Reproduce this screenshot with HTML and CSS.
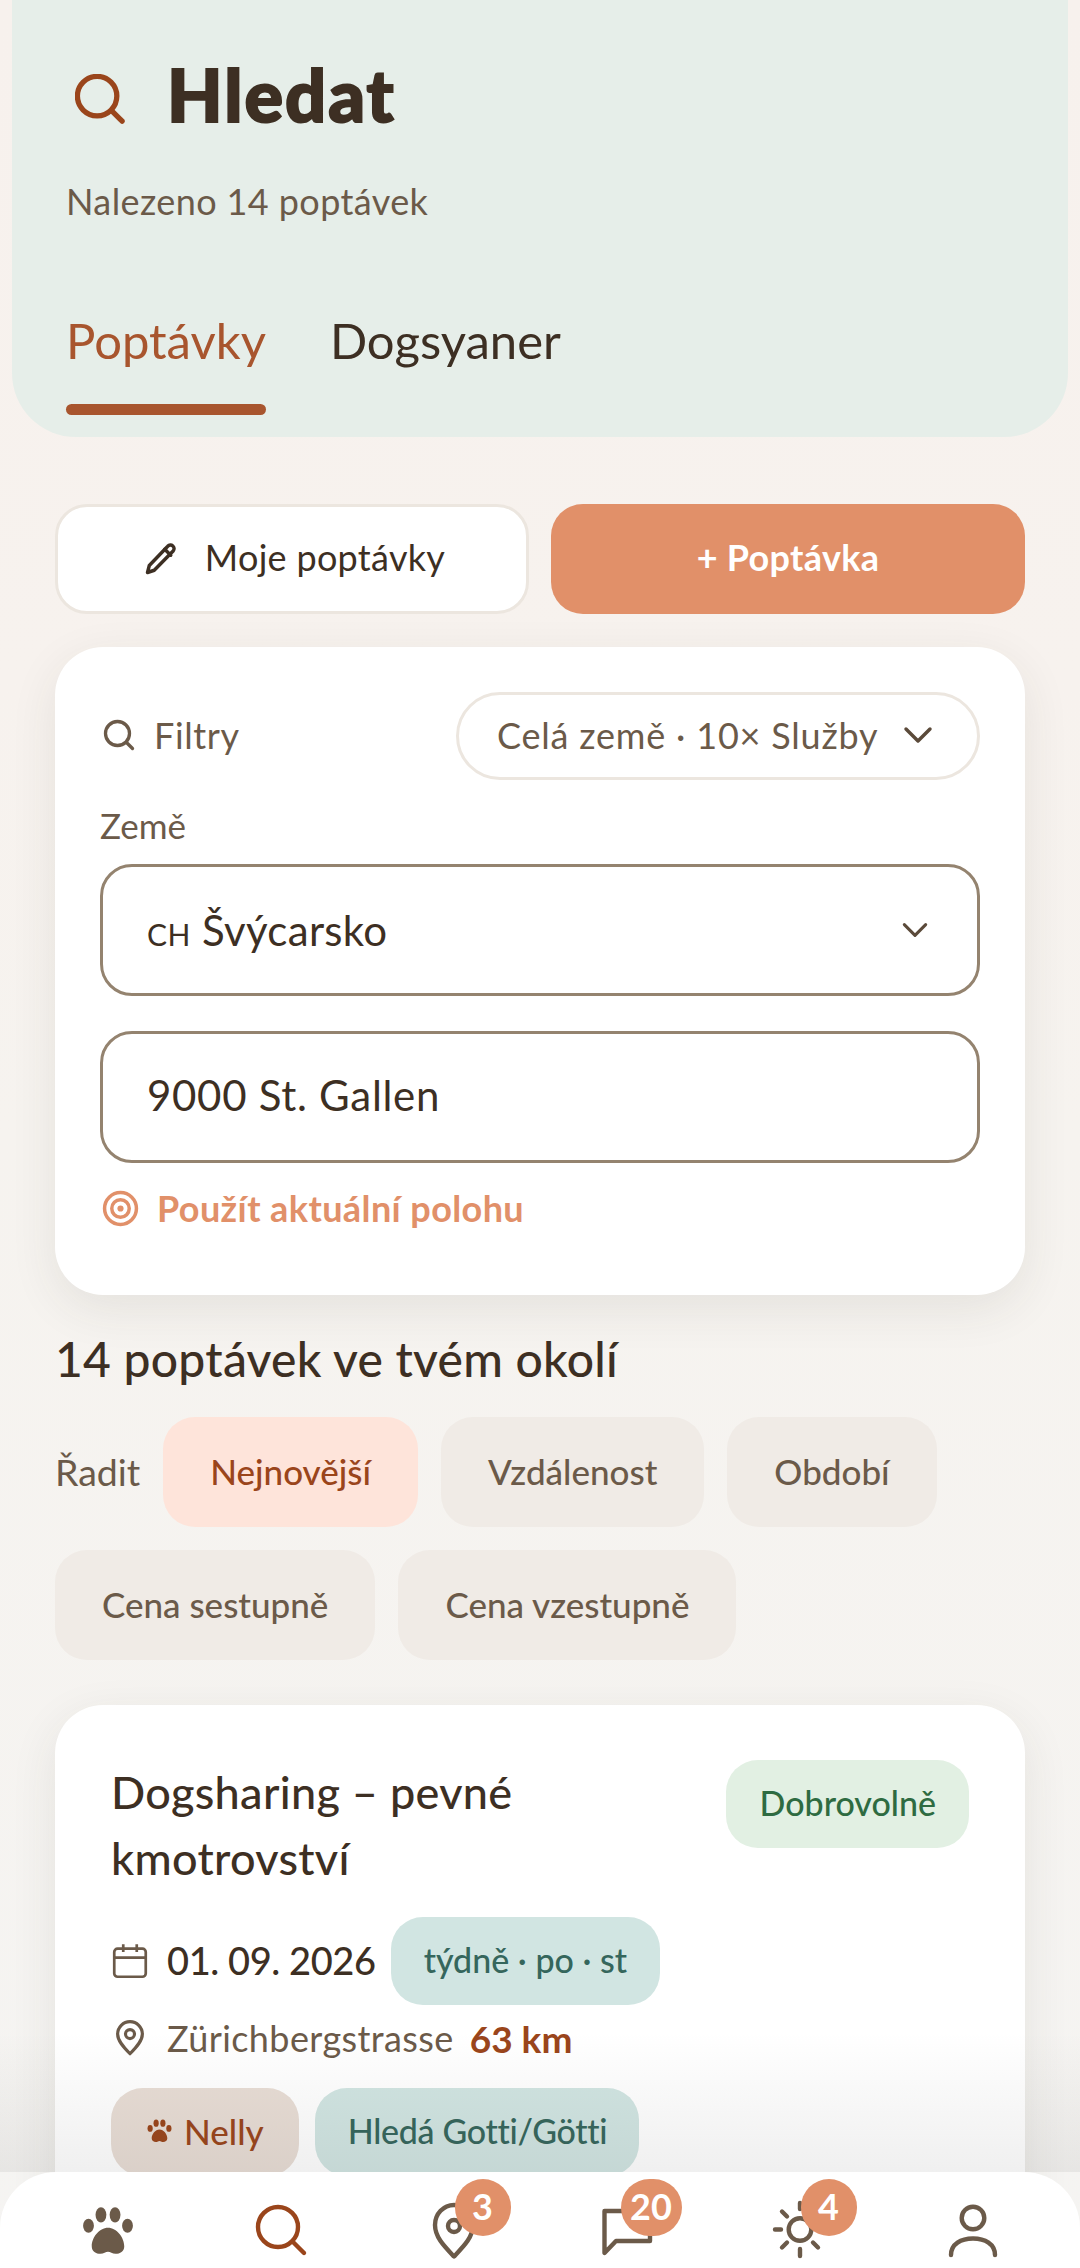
FILE: index.html
```html
<!DOCTYPE html>
<html lang="cs">
<head>
<meta charset="utf-8">
<title>Hledat</title>
<link rel="stylesheet" href="styles.css">
</head>
<body>
<div class="app">
  <header class="hero">
    <div class="hero-title">
      <svg class="ico-title" viewBox="0 0 52 52"><circle cx="23" cy="23" r="20.500"/><path d="M38 38l11 11"/></svg>
      <h1>Hledat</h1>
    </div>
    <p class="hero-sub">Nalezeno 14 poptávek</p>
    <nav class="tabs">
      <div class="tab active">Poptávky</div>
      <div class="tab">Dogsyaner</div>
    </nav>
  </header>

  <main class="content">
    <div class="actions">
      <button class="btn btn-light">
        <svg class="ico-pen" viewBox="0 0 24 24"><path d="M16.500 3.500a2.300 2.300 0 0 1 3.600 3.200L7.500 19.500 3 21l1.200-4.700z"/><path d="M14.500 5.500l4 4"/></svg>
        Moje poptávky
      </button>
      <button class="btn btn-primary">+ Poptávka</button>
    </div>

    <section class="card filters">
      <div class="filter-head">
        <div class="filter-label">
          <svg class="ico-s" viewBox="0 0 24 24"><circle cx="11" cy="11" r="8"/><path d="M17 17l4 4"/></svg>
          Filtry
        </div>
        <div class="filter-pill">Celá země · 10× Služby
          <svg class="ico-chev" viewBox="0 0 24 24"><path d="M4 8l8 8 8-8"/></svg>
        </div>
      </div>
      <div class="field-label">Země</div>
      <div class="field field-select"><span class="field-value"><span class="flag">CH</span> Švýcarsko</span>
        <svg class="ico-chev small" viewBox="0 0 24 24"><path d="M4 8l8 8 8-8"/></svg>
      </div>
      <div class="field field-input">9000 St. Gallen</div>
      <div class="geo">
        <svg class="ico-geo" viewBox="0 0 36 36"><circle cx="18" cy="18" r="15.500"/><circle cx="18" cy="18" r="8.500"/><circle class="dot" cx="18" cy="18" r="3"/></svg>
        Použít aktuální polohu
      </div>
    </section>

    <h2 class="count">14 poptávek ve tvém okolí</h2>

    <div class="sort">
      <span class="sort-label">Řadit</span>
      <span class="chip selected">Nejnovější</span>
      <span class="chip">Vzdálenost</span>
      <span class="chip">Období</span>
      <span class="chip">Cena sestupně</span>
      <span class="chip">Cena vzestupně</span>
    </div>

    <article class="card request">
      <div class="req-head">
        <h3>Dogsharing – pevné kmotrovství</h3>
        <span class="tag tag-green">Dobrovolně</span>
      </div>
      <div class="req-date">
        <svg class="ico-m" viewBox="0 0 32 32"><rect x="2" y="5" width="28" height="25" rx="3"/><path d="M2 13h28M10 1v7M22 1v7"/></svg>
        <span class="date">01. 09. 2026</span>
        <span class="tag tag-teal">týdně · po · st</span>
      </div>
      <div class="req-place">
        <svg class="ico-m ico-pin" viewBox="0 0 32 32"><path d="M16 30C10 24 5 18.500 5 12.500a11 11 0 0 1 22 0C27 18.500 22 24 16 30z"/><circle cx="16" cy="12.500" r="4"/></svg>
        <span class="place">Zürichbergstrasse</span>
        <span class="km">63 km</span>
      </div>
      <div class="req-tags">
        <span class="tag tag-dog">
          <svg class="ico-paw" viewBox="0 0 48 44"><ellipse cx="17.500" cy="8" rx="5" ry="7"/><ellipse cx="30.500" cy="8" rx="5" ry="7"/><ellipse cx="6" cy="18" rx="5" ry="6.500"/><ellipse cx="42" cy="18" rx="5" ry="6.500"/><path d="M24 20c8 0 15 9 15 17 0 5-4 7-8 7-3 0-5-2-7-2s-4 2-7 2c-4 0-8-2-8-7 0-8 7-17 15-17z"/></svg>
          Nelly</span>
        <span class="tag tag-teal tag-seek">Hledá Gotti/Götti</span>
      </div>
    </article>
  </main>

  <div class="fade"></div>

  <nav class="bottom">
    <div class="nav-item">
      <svg class="nav-paw" viewBox="0 0 48 44"><ellipse cx="17.500" cy="8" rx="5" ry="7"/><ellipse cx="30.500" cy="8" rx="5" ry="7"/><ellipse cx="6" cy="18" rx="5" ry="6.500"/><ellipse cx="42" cy="18" rx="5" ry="6.500"/><path d="M24 20c8 0 15 9 15 17 0 5-4 7-8 7-3 0-5-2-7-2s-4 2-7 2c-4 0-8-2-8-7 0-8 7-17 15-17z"/></svg>
    </div>
    <div class="nav-item">
      <svg class="nav-ico active" viewBox="0 0 52 52"><circle cx="23" cy="24" r="20"/><path d="M38 39l11 11"/></svg>
    </div>
    <div class="nav-item">
      <svg class="nav-ico" viewBox="0 0 52 52"><path d="M26 53.500C16 43 7 34 7 22a19 20 0 0 1 38 0C45 34 36 43 26 53.500z"/><circle cx="26" cy="23" r="6"/></svg>
      <span class="badge">3</span>
    </div>
    <div class="nav-item">
      <svg class="nav-ico" viewBox="0 0 52 52"><path d="M3.500 50V8h45.500v30H15z"/></svg>
      <span class="badge wide">20</span>
    </div>
    <div class="nav-item">
      <svg class="nav-ico" viewBox="0 0 52 52"><circle cx="26" cy="26.500" r="11.300"/><path d="M26 0v6M26 46v7M1 26.500h6M8 8.500l5 5M39 39.500l5 5M8 44.500l5-5M39 13.500l5-5"/></svg>
      <span class="badge">4</span>
    </div>
    <div class="nav-item">
      <svg class="nav-ico" viewBox="0 0 52 52"><circle cx="26" cy="15" r="11.300"/><path d="M4 52C4 41 14 35.500 26 35.500S48 41 48 52"/></svg>
    </div>
  </nav>
</div>
</body>
</html>
```

FILE: styles.css
```css
* { box-sizing: border-box; }
html, body { margin: 0; padding: 0; }
body {
  width: 1080px;
  height: 2268px;
  overflow: hidden;
  font-family: "Lato", "Noto Sans", sans-serif;
  color: #3d2f23;
}
.app {
  position: relative;
  width: 1080px;
  height: 2268px;
  overflow: hidden;
  background: linear-gradient(180deg, #f7f1ed 0%, #f7f2ee 30%, #f6f3ef 50%, #f5f4f2 100%);
}
.hero {
  margin: 0 12px;
  height: 437px;
  padding: 56px 54px 0;
  background: #e6eee9;
  border-radius: 0 0 64px 64px;
}
.hero-title { display: flex; align-items: center; height: 76px; padding-left: 9px; }
.ico-title { width: 50px; height: 50px; fill: none; stroke: #9a451b; stroke-width: 5.500; stroke-linecap: round; margin-top: 10px; }
h1 {
  margin: 0 0 0 42px;
  font-weight: 900;
  font-size: 72px;
  line-height: 76px;
  letter-spacing: 2px;
  color: #3d2f23;
  -webkit-text-stroke: 2px #3d2f23;
}
.hero-sub { margin: 46px 0 0; font-size: 36px; line-height: 46px; letter-spacing: .4px; color: #6b5a49; }
.tabs { display: flex; gap: 64px; margin-top: 86px; }
.tab { font-size: 49px; line-height: 60px; height: 105px; color: #3d2f23; position: relative; }
.tab.active { color: #a8552e; }
.tab.active::after {
  content: ""; position: absolute; left: 0; right: 0; bottom: 0;
  height: 11px; border-radius: 6px; background: #a8552e;
}
.content { padding: 67px 55px 0; }
.actions { display: grid; grid-template-columns: 1fr 1fr; gap: 22px; }
.btn {
  height: 110px; border-radius: 32px; font: inherit; font-size: 36px; letter-spacing: .3px;
  display: flex; align-items: center; justify-content: center; gap: 26px; padding: 0 0 4px;
}
.btn-light { background: #fff; border: 3px solid #ece6df; color: #3d2f23; padding-left: 4px; }
.btn-primary { background: #e19069; border: 0; color: #fff; font-weight: 700; }
.ico-pen { width: 36px; height: 36px; fill: none; stroke: #3d2f23; stroke-width: 2.300; stroke-linejoin: round; stroke-linecap: round; margin-top: 4px; }
.card { background: #fff; border-radius: 48px; box-shadow: 0 14px 48px rgba(60, 50, 40, .09); }
.filters { margin-top: 33px; height: 648px; padding: 45px 45px 0; }
.filter-head { display: flex; justify-content: space-between; align-items: center; }
.filter-label { display: flex; align-items: center; gap: 17px; font-size: 36px; letter-spacing: .6px; color: #6b5a49; padding: 0 0 2px 1px; }
.ico-s { width: 36px; height: 36px; fill: none; stroke: #6b5a49; stroke-width: 2.200; stroke-linecap: round; }
.filter-pill {
  height: 88px; width: 524px; border: 3px solid #ece6df; border-radius: 44px;
  display: flex; align-items: center; justify-content: space-between; padding: 0 41px 2px 38px;
  font-size: 36px; letter-spacing: .8px; color: #6b5a49; white-space: nowrap;
}
.ico-chev { width: 36px; height: 36px; fill: none; stroke: #5b4a3a; stroke-width: 2.300; stroke-linecap: round; stroke-linejoin: round; }
.ico-chev.small { width: 32px; height: 32px; }
.field-label { margin-top: 23px; font-size: 35px; line-height: 44px; color: #6b5a49; }
.field {
  height: 132px; border: 3px solid #94836f; border-radius: 32px; background: #fff;
  display: flex; align-items: center; justify-content: space-between;
  padding: 0 46px 0 44px; font-size: 42px; color: #3d2f23;
}
.field-value { letter-spacing: .3px; }
.field-select { margin-top: 17px; }
.field-input { margin-top: 35px; padding-bottom: 4px; letter-spacing: .7px; }
.flag { font-size: 30px; letter-spacing: .5px; }
.geo { display: flex; align-items: center; gap: 18px; margin-top: 23px; font-size: 36px; font-weight: 700; letter-spacing: .4px; color: #e19069; padding-left: 2px; }
.ico-geo { width: 37px; height: 37px; fill: none; stroke: #e19069; stroke-width: 3.400; }
.ico-geo .dot { fill: #e19069; stroke: none; }
.count { margin: 34px 0 0; font-size: 48px; line-height: 60px; font-weight: 500; letter-spacing: .25px; color: #3d2f23; }
.sort { display: flex; flex-wrap: wrap; align-items: center; gap: 23px 23px; margin-top: 28px; }
.sort-label { font-size: 37.500px; color: #6b5a49; padding-bottom: 2px; }
.chip {
  height: 110px; padding: 0 47px 3px; border-radius: 32px; background: #f0ebe6;
  display: flex; align-items: center; font-size: 35px; font-weight: 500; color: #6b5a49;
}
.chip.selected { background: #fee4da; color: #9a451b; }
.request { margin-top: 45px; height: 620px; padding: 55px 56px 0; }
.req-head { display: flex; justify-content: space-between; align-items: flex-start; }
h3 { margin: -1px 0 1px; width: 560px; font-size: 45px; line-height: 66px; font-weight: 500; letter-spacing: .3px; color: #3d2f23; }
.tag { display: inline-flex; align-items: center; height: 88px; padding: 0 33px 3px; border-radius: 32px; font-size: 34px; font-weight: 500; white-space: nowrap; }
.tag-green { background: #e2f0e3; color: #2e6b41; padding-left: 34px; padding-right: 33px; }
.tag-teal { background: #d1e5e2; color: #35665c; }
.tag-seek { letter-spacing: -.3px; padding-right: 32px; }
.tag-dog { background: #e8ddd5; color: #9a451b; gap: 12px; padding: 0 35px 3px 36px; font-size: 35px; }
.req-date { display: flex; align-items: center; margin-top: 25px; gap: 15px; }
.ico-m { width: 36px; height: 36px; fill: none; stroke: #6b5a49; stroke-width: 2.400; flex: none; margin-left: 1px; stroke-linejoin: round; }
.ico-pin { stroke-width: 2.800; }
.date { font-size: 38px; font-weight: 500; letter-spacing: -.4px; margin-left: 4px; padding-bottom: 3px; }
.req-place { display: flex; align-items: center; gap: 16px; margin-top: 3px; height: 60px; }
.place { font-size: 36px; letter-spacing: .4px; color: #6b5a49; margin-left: 3px; }
.km { font-size: 37px; font-weight: 700; color: #9a451b; }
.req-tags { display: flex; gap: 16px; margin-top: 20px; }
.ico-paw { width: 25px; height: 23px; fill: #9a451b; }
.fade {
  position: absolute; left: 0; right: 0; bottom: 96px; height: 140px;
  background: linear-gradient(180deg, rgba(60, 60, 60, 0), rgba(60, 60, 60, .08));
}
.bottom {
  position: absolute; left: 0; right: 0; bottom: 0; height: 96px;
  background: #fff; border-radius: 56px 56px 0 0;
  display: grid; grid-template-columns: repeat(6, 1fr); padding: 0 21px;
}
.nav-item { position: relative; display: flex; justify-content: center; padding-top: 31px; }
.nav-ico { width: 52px; height: 52px; fill: none; stroke: #6b5a49; stroke-width: 4.400; stroke-linecap: round; stroke-linejoin: round; overflow: visible; }
.nav-ico.active { stroke: #9a451b; }
.nav-paw { width: 52px; height: 48px; fill: #6b5a49; margin-top: 3px; }
.badge {
  position: absolute; top: 7px; left: 50%; margin-left: 1px;
  width: 56px; height: 57px; border-radius: 29px; background: #e19069; color: #fff;
  display: flex; align-items: center; justify-content: center; font-size: 36px; font-weight: 700; padding-bottom: 3px;
}
.badge.wide { width: 61px; margin-left: -6px; }
```
